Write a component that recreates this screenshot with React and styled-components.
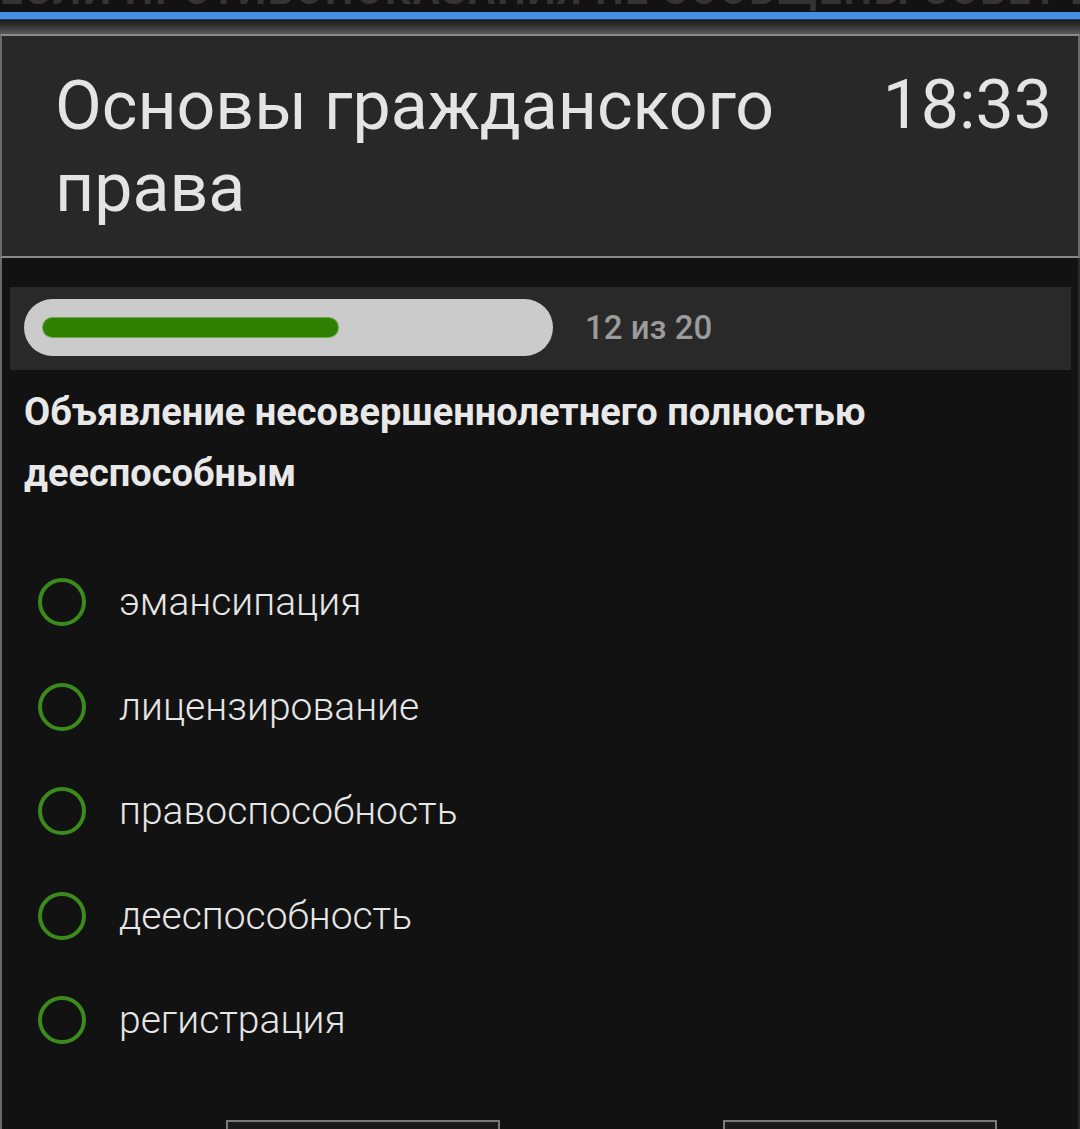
import React from "react";
import styled, { createGlobalStyle } from "styled-components";

const GlobalStyle = createGlobalStyle`
  html, body {
    margin: 0;
    padding: 0;
    background: #121212;
  }
  * {
    box-sizing: border-box;
  }
`;

const options = [
  "эмансипация",
  "лицензирование",
  "правоспособность",
  "дееспособность",
  "регистрация",
];

const current = 12;
const total = 20;

function App() {
  return (
    <>
      <GlobalStyle />
      <Page>
        {/* previous screen, cut by the top of the shot */}
        <TopStrip>
          <CutText>ЕСЛИ ПРОТИВОПОКАЗАНИЯ НЕ СООБЩЕНЫ СОВЕТ ВРАЧУ</CutText>
        </TopStrip>
        <BlueBar />
        <Shade />

        <Card>
          <Header>
            <Title>Основы гражданского права</Title>
            <Timer>18:33</Timer>
          </Header>

          <ProgressPanel>
            <Track>
              <Fill style={{ width: `${(current / total) * 100}%` }} />
            </Track>
            <Counter>
              {current} из {total}
            </Counter>
          </ProgressPanel>

          <Question>Объявление несовершеннолетнего полностью дееспособным</Question>

          <OptionList>
            {options.map((text) => (
              <Option key={text}>
                <Radio />
                <OptionText>{text}</OptionText>
              </Option>
            ))}
          </OptionList>

          <Buttons>
            <NavButton />
            <NavButton />
          </Buttons>
        </Card>
      </Page>
    </>
  );
}

const Page = styled.div`
  height: 100vh;
  overflow: hidden;
  background: #121212;
  font-family: Roboto, "Noto Sans", "Liberation Sans", sans-serif;
`;

const TopStrip = styled.div`
  height: 12px;
  overflow: hidden;
  background: #121212;
`;

const CutText = styled.div`
  margin-top: -29px;
  font-size: 40px;
  line-height: 40px;
  font-weight: 700;
  letter-spacing: 2px;
  white-space: nowrap;
  color: #343434;
`;

const BlueBar = styled.div`
  height: 8px;
  background: #468ee6;
  border-bottom: 1px solid #1d3a66;
`;

const Shade = styled.div`
  height: 14px;
  background: linear-gradient(180deg, #1b1b1b 0%, #3a3a3a 55%, #5a5a5a 100%);
`;

const Card = styled.div`
  border-left: 2px solid #6a6a6a;
  border-right: 2px solid #2a2a2a;
  min-height: 100%;
`;

const Header = styled.div`
  display: flex;
  justify-content: space-between;
  align-items: flex-start;
  padding: 29px 26px 27px 53px;
  background: #282828;
  border-top: 2px solid #8a8a8a;
  border-bottom: 2px solid #8a8a8a;
  margin-left: -2px;
  margin-right: -2px;
  border-left: 2px solid #6a6a6a;
  border-right: 2px solid #6a6a6a;
`;

const Title = styled.h1`
  margin: 0;
  width: 780px;
  font-size: 68px;
  line-height: 82px;
  font-weight: 400;
  color: #e4e4e4;
`;

const Timer = styled.div`
  margin-top: 2px;
  font-size: 68px;
  line-height: 76px;
  font-weight: 400;
  color: #e4e4e4;
`;

const ProgressPanel = styled.div`
  display: flex;
  align-items: center;
  margin: 29px 7px 0 8px;
  padding: 12px 14px 14px;
  background: #292929;
`;

const Track = styled.div`
  display: flex;
  align-items: center;
  width: 529px;
  height: 57px;
  padding: 0 19px;
  border-radius: 29px;
  background: #cbcbcb;

  & > * {
    flex: none;
  }
`;

const Fill = styled.div`
  height: 19px;
  border-radius: 10px;
  background: #2f8000;
  box-shadow: 0 0 0 1px #6aa84a;
`;

const Counter = styled.div`
  margin-left: 32px;
  font-size: 33px;
  font-weight: 500;
  color: #9b9b9b;
`;

const Question = styled.p`
  margin: 12px 0 0;
  padding: 0 40px 0 22px;
  font-size: 38px;
  line-height: 61px;
  font-weight: 700;
  color: #e8e8e8;
`;

const OptionList = styled.div`
  display: flex;
  flex-direction: column;
  margin-top: 46px;
  padding-left: 36px;
`;

const Option = styled.label`
  display: flex;
  align-items: center;
  height: 104.5px;
  gap: 33px;
`;

const Radio = styled.span`
  flex: none;
  width: 48px;
  height: 48px;
  border-radius: 50%;
  border: 4px solid #3b8a1c;
`;

const OptionText = styled.span`
  font-size: 39px;
  font-weight: 300;
  color: #e6e6e6;
`;

const Buttons = styled.div`
  display: flex;
  gap: 223px;
  margin-top: 47px;
  padding-left: 224px;
`;

const NavButton = styled.button`
  width: 274px;
  height: 70px;
  background: #1a1a1a;
  border: 2px solid #7a7a7a;
  border-radius: 0;
`;

export default App;
